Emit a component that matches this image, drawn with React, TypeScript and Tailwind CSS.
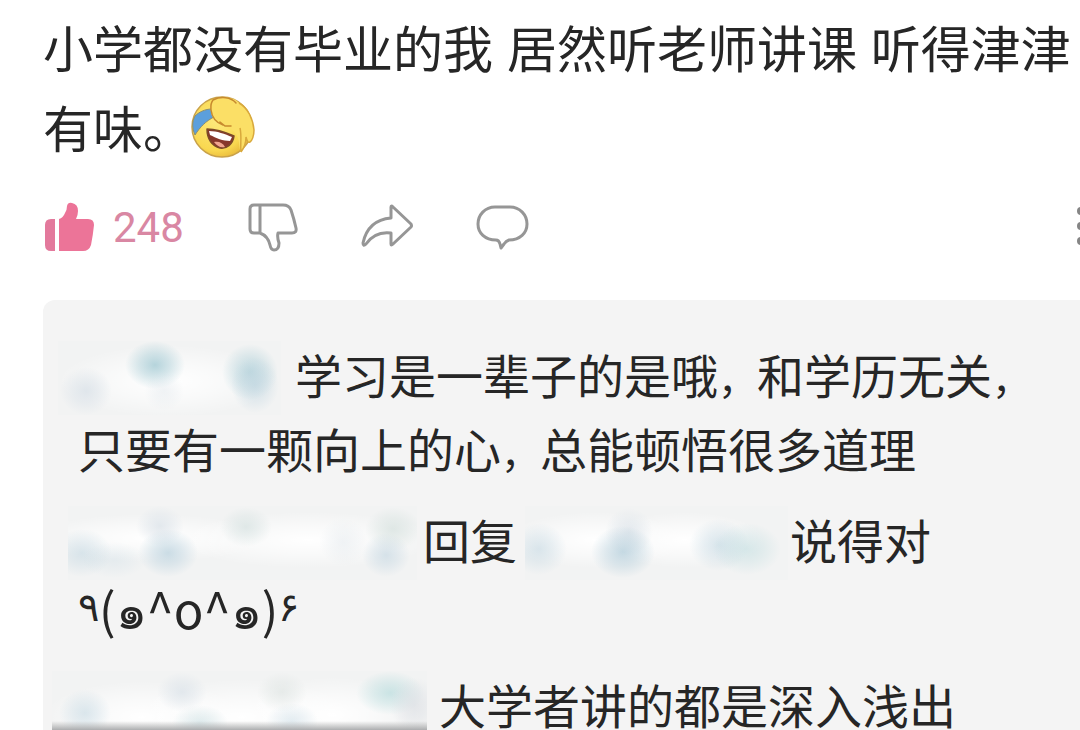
import { Fragment, type ReactNode } from "react";

type Spot = {
  x: number;
  y: number;
  rx: number;
  ry: number;
  color: string;
  opacity: number;
};

type HiddenNameProps = {
  id: string;
  width: number;
  className: string;
  spots: Spot[];
  shadow?: boolean;
};

// User name that has been smudged out
function HiddenName({ id, width, className, spots, shadow }: HiddenNameProps) {
  return (
    <svg
      role="img"
      aria-label="Hidden user name"
      viewBox={`0 0 ${width} 74`}
      className={`inline-block h-[74px] align-top ${className}`}
    >
      <defs>
        {spots.map((spot, i) => (
          <radialGradient key={i} id={`${id}-${i}`}>
            <stop offset="0" stopColor={spot.color} stopOpacity={spot.opacity} />
            <stop
              offset="0.5"
              stopColor={spot.color}
              stopOpacity={spot.opacity * 0.55}
            />
            <stop offset="1" stopColor={spot.color} stopOpacity="0" />
          </radialGradient>
        ))}
        <linearGradient id={`${id}-shadow`} x1="0" y1="0" x2="0" y2="1">
          <stop offset="0" stopColor="#aaaaaa" stopOpacity="0" />
          <stop offset="1" stopColor="#a3a5a7" />
        </linearGradient>
      </defs>
      <rect width={width} height="74" fill="#f2f3f3" />
      {spots.map((spot, i) => (
        <ellipse
          key={i}
          cx={spot.x}
          cy={spot.y}
          rx={spot.rx}
          ry={spot.ry}
          fill={`url(#${id}-${i})`}
        />
      ))}
      {shadow && (
        <rect y="50" width={width} height="10" fill={`url(#${id}-shadow)`} />
      )}
    </svg>
  );
}

function LaughingEmoji() {
  return (
    <svg
      role="img"
      aria-label="Laughing and crying"
      viewBox="0 0 64 64"
      className="-mt-4 -ml-0.5 inline-block size-16 align-middle"
    >
      <defs>
        <radialGradient id="face" cx="0.4" cy="0.4" r="0.65">
          <stop offset="0" stopColor="#fde97c" />
          <stop offset="0.75" stopColor="#f9d850" />
          <stop offset="1" stopColor="#e9b93a" />
        </radialGradient>
      </defs>
      <circle cx="31" cy="32" r="30" fill="url(#face)" stroke="#c9a24a" strokeWidth="1.5" />
      <path
        d="M4 21 C8 17 14 14 21 14 C21 18 22 20 23 22 C15 26 9 32 4 40 C1 33 1 27 4 21Z"
        fill="#5b9fdc"
        stroke="#8c8f70"
        strokeWidth="1"
      />
      <path
        d="M22 5 C30 1 43 2 48 8 C57 13 62 24 63 35 C63 41 61 46 59 47 C57 48 56 46 55 42 C55 48 53 53 50 57 C47 52 50 45 44 38 C40 32 35 32 30 29 C22 25 19 19 20 13 C20 9 20 7 22 5Z"
        fill="#fbdf66"
      />
      <path
        d="M48 8 C57 13 62 24 63 35 C63 41 61 46 59 47 C57 48 56 46 55 42 C55 48 53 53 50 57 M49 33 C51 41 49 50 50 57"
        fill="none"
        stroke="#d9a93c"
        strokeWidth="1.5"
      />
      <path
        d="M22 5 C19 9 20 13 20 15 C21 23 26 28 32 30 M22 5 C30 1 40 2 45 8 M29 27 L34 31 L40 31"
        fill="none"
        stroke="#c78a2e"
        strokeWidth="1.5"
        strokeLinecap="round"
      />
      <path
        d="M16 34 C24 34 34 37 43 41 C42 49 36 54 29 53 C21 51 16 44 16 34Z"
        fill="#87372b"
        stroke="#7b4a28"
        strokeWidth="1.5"
        strokeLinejoin="round"
      />
      <path d="M18 36 C26 36 34 39 41 42 L39 46 C32 46 25 43 19 40Z" fill="#ffffff" />
      <path d="M23 47 C28 46 32 48 34 52 C29 53 26 51 23 47Z" fill="#f0a58f" />
    </svg>
  );
}

function LikeIcon() {
  return (
    <svg viewBox="0 0 50 50" className="size-[50px]" fill="#ec7498">
      <path d="M6 17 H10 V49 H6 Q0 49 0 43 V23 Q0 17 6 17Z" fill="#e3799c" />
      <path d="M14 17 Q18 16 20 11 Q22 8 22 4 Q23 0 27 1 Q33 2 33 9 Q33 13 31 17 H43 Q49 17 49 23 Q48 33 46 43 Q44 49 38 49 H14Z" />
    </svg>
  );
}

function DislikeIcon() {
  return (
    <svg viewBox="0 0 52 50" className="h-[50px] w-[52px]" {...outline}>
      <path d="M7 3 H36 Q42 3 44 8 Q47 17 49 26 Q50 31 45 31 H31 Q30 35 32 41 Q32 48 27 48 Q24 48 23 43 Q21 34 13 31 H7 Q3 31 3 27 V7 Q3 3 7 3Z M13 3 V31" />
    </svg>
  );
}

function ShareIcon() {
  return (
    <svg viewBox="0 0 54 50" className="h-[50px] w-[54px]" {...outline}>
      <path d="M30 5 Q30 3 32 5 L50 22 Q51 24 50 25 L32 42 Q30 44 30 42 V31 Q14 29 5 42 Q2 45 2 41 Q7 18 30 16Z" />
    </svg>
  );
}

function CommentIcon() {
  return (
    <svg viewBox="0 0 54 50" className="h-[50px] w-[54px]" {...outline}>
      <path d="M20 5 H35 C45 5 52 13 52 22 C52 31 45 38 34 38 Q31 39 29 42 L26 46 L25 42 Q24 38 21 38 C10 38 3 31 3 22 C3 13 10 5 20 5Z" />
    </svg>
  );
}

const outline = {
  fill: "none",
  stroke: "#969696",
  strokeWidth: 3,
  strokeLinejoin: "round",
} as const;

// Commas are set a size smaller than the characters around them
function ReplyText({ children }: { children: string }) {
  return (
    <>
      {children.split("，").map((part, i) => (
        <Fragment key={i}>
          {i > 0 && <span className="text-[39px] leading-none">，</span>}
          {part}
        </Fragment>
      ))}
    </>
  );
}

function Reply({ children }: { children: ReactNode }) {
  return <p className="text-[47px] leading-[74px]">{children}</p>;
}

const TEAL = "#a9cdd6";
const BLUE = "#bcd3df";
const GREY = "#dde4ea";
const WHITE = "#ffffff";

const names: Record<string, Spot[]> = {
  first: [
    { x: 110, y: 40, rx: 110, ry: 36, color: WHITE, opacity: 1 },
    { x: 28, y: 50, rx: 26, ry: 24, color: GREY, opacity: 0.9 },
    { x: 97, y: 24, rx: 30, ry: 24, color: TEAL, opacity: 0.85 },
    { x: 106, y: 50, rx: 20, ry: 20, color: GREY, opacity: 0.4 },
    { x: 192, y: 31, rx: 28, ry: 28, color: TEAL, opacity: 0.7 },
    { x: 197, y: 44, rx: 24, ry: 28, color: BLUE, opacity: 0.6 },
  ],
  second: [
    { x: 80, y: 32, rx: 120, ry: 24, color: WHITE, opacity: 1 },
    { x: 240, y: 34, rx: 130, ry: 28, color: WHITE, opacity: 1 },
    { x: 14, y: 47, rx: 30, ry: 24, color: BLUE, opacity: 0.5 },
    { x: 46, y: 54, rx: 32, ry: 18, color: BLUE, opacity: 0.25 },
    { x: 92, y: 20, rx: 24, ry: 20, color: GREY, opacity: 0.8 },
    { x: 100, y: 47, rx: 30, ry: 24, color: BLUE, opacity: 0.75 },
    { x: 178, y: 21, rx: 26, ry: 20, color: "#d5e1e0", opacity: 0.7 },
    { x: 275, y: 36, rx: 24, ry: 24, color: GREY, opacity: 0.4 },
    { x: 325, y: 23, rx: 28, ry: 22, color: "#d5e1de", opacity: 0.7 },
    { x: 318, y: 49, rx: 24, ry: 22, color: "#c8d9e3", opacity: 0.7 },
  ],
  third: [
    { x: 70, y: 34, rx: 90, ry: 28, color: WHITE, opacity: 1 },
    { x: 160, y: 34, rx: 80, ry: 28, color: WHITE, opacity: 1 },
    { x: 14, y: 43, rx: 28, ry: 26, color: BLUE, opacity: 0.5 },
    { x: 104, y: 26, rx: 24, ry: 24, color: GREY, opacity: 0.8 },
    { x: 98, y: 46, rx: 32, ry: 26, color: "#afcbd9", opacity: 0.7 },
    { x: 194, y: 39, rx: 30, ry: 26, color: BLUE, opacity: 0.55 },
    { x: 222, y: 43, rx: 34, ry: 26, color: "#b9dadd", opacity: 0.5 },
  ],
  fourth: [
    { x: 90, y: 46, rx: 100, ry: 36, color: WHITE, opacity: 1 },
    { x: 190, y: 46, rx: 110, ry: 38, color: WHITE, opacity: 1 },
    { x: 280, y: 44, rx: 90, ry: 38, color: WHITE, opacity: 1 },
    { x: 33, y: 42, rx: 26, ry: 24, color: BLUE, opacity: 0.5 },
    { x: 130, y: 21, rx: 25, ry: 20, color: GREY, opacity: 0.8 },
    { x: 148, y: 52, rx: 28, ry: 18, color: "#c0d8dc", opacity: 0.5 },
    { x: 230, y: 21, rx: 25, ry: 20, color: "#dfe5e3", opacity: 0.7 },
    { x: 240, y: 50, rx: 26, ry: 18, color: BLUE, opacity: 0.4 },
    { x: 338, y: 22, rx: 34, ry: 22, color: "#b8dcdd", opacity: 0.7 },
    { x: 362, y: 34, rx: 24, ry: 28, color: "#dcdfe4", opacity: 0.7 },
  ],
};

export default function App() {
  return (
    <main className="h-screen overflow-hidden bg-white pt-[11px] pl-[43px] font-['Liberation_Sans','Noto_Sans_CJK_SC',sans-serif] text-[#262626]">
      <p className="text-[50px] leading-[80px]">
        小学都没有毕业的我 居然听老师讲课 听得津津有味。
        <LaughingEmoji />
      </p>

      <div className="mt-[31px] flex h-[50px] items-center pl-0.5">
        <button
          type="button"
          aria-label="Like"
          className="flex w-[202px] items-center gap-[18px] font-[Roboto,sans-serif] text-[42px] text-[#d987a3]"
        >
          <LikeIcon />
          248
        </button>
        <button type="button" aria-label="Dislike" className="w-[114px]">
          <DislikeIcon />
        </button>
        <button type="button" aria-label="Share" className="w-[114px]">
          <ShareIcon />
        </button>
        <button type="button" aria-label="Comment">
          <CommentIcon />
        </button>
        <button type="button" aria-label="More" className="ml-auto">
          <svg viewBox="0 0 4 50" className="h-[50px] w-1" fill="#858585">
            <circle cx="5" cy="9" r="4" />
            <circle cx="5" cy="24" r="4" />
            <circle cx="5" cy="39" r="4" />
          </svg>
        </button>
      </div>

      <section className="mt-12 flex flex-col gap-[17px] rounded-tl-xl bg-[#f4f4f4] pt-[41px] pr-5 pl-[35px]">
        <Reply>
          <HiddenName
            id="first"
            width={223}
            className="mr-[14px] -ml-5 w-[223px]"
            spots={names.first}
          />
          <ReplyText>
            学习是一辈子的是哦，和学历无关，只要有一颗向上的心，总能顿悟很多道理
          </ReplyText>
        </Reply>
        <Reply>
          <HiddenName
            id="second"
            width={349}
            className="mr-1.5 -ml-[10px] w-[349px]"
            spots={names.second}
          />
          回复
          <HiddenName
            id="third"
            width={263}
            className="mr-0.5 ml-2 w-[263px]"
            spots={names.third}
          />
          说得对
          <br />
          <span className="align-[4px] font-['Noto_Sans_CJK_SC','Noto_Sans',sans-serif] text-[49px] leading-none">
            <span className="align-[8px] text-[40px]">٩</span>
            (๑^o^๑)
            <span className="align-[8px] text-[40px]">۶</span>
          </span>
        </Reply>
        <Reply>
          <HiddenName
            id="fourth"
            width={375}
            className="mr-3 -ml-[26px] w-[375px]"
            spots={names.fourth}
            shadow
          />
          大学者讲的都是深入浅出
        </Reply>
      </section>
    </main>
  );
}
